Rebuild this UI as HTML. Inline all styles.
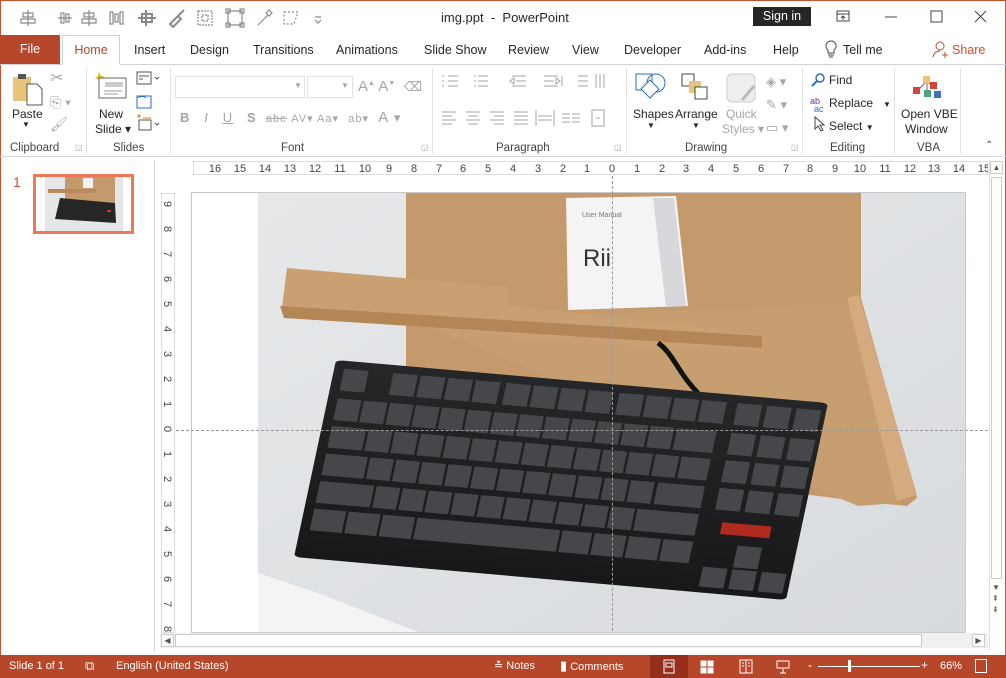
<!DOCTYPE html>
<html><head><meta charset="utf-8"><style>
*{box-sizing:border-box;margin:0;padding:0}
body{width:1006px;height:678px;position:relative;overflow:hidden;background:#fff;font-family:"Liberation Sans",sans-serif;font-size:12px;color:#262626}
.a{position:absolute}
.t{position:absolute;white-space:nowrap}
.g{color:#a6a6a6}
.lbl{position:absolute;top:142px;font-size:11.5px;color:#444}
.sep{position:absolute;top:68px;width:1px;height:86px;background:#e1e1e1}
.tab{position:absolute;top:43px;font-size:12.5px;color:#262626}
</style></head><body>
<div class="a" style="left:0;top:0;width:1006px;height:678px;border:1px solid #c9502f;border-bottom:none"></div>
<svg class="a" style="left:18px;top:8px" width="310" height="20" fill="none" stroke="#8a8a8a" stroke-width="1.2">
<path d="M10 2v16M5 5h10v4H5zM3 11h14v4H3z"/>
<path d="M40 10h14M43 5h3v10h-3zM48 6h3v8h-3z"/>
<path d="M71 2v16M66 5h10v4H66zM64 11h14v4H64z"/>
<path d="M92 4h3v12h-3zM97 6h3v8h-3zM102 4h3v12h-3z"/>
<path d="M124 6h10v8h-10zM128 2v16M120 10h18" stroke-width="2"/>
<path d="M152 16l8-8 3 3-8 8zM160 8l6-6" stroke-width="2"/>
<path d="M180 3h14v14h-14zM184 7h6v6h-6z" stroke-dasharray="2 1"/>
<path d="M210 3h14v14h-14zM208 1h4v4h-4zM222 1h4v4h-4zM208 15h4v4h-4zM222 15h4v4h-4z"/>
<path d="M240 17l10-10M248 5l3-3 3 3-3 3z"/>
<path d="M266 4h14l-4 12h-10z" stroke-dasharray="2 2"/>
<path d="M297 12l3 3 3-3M297 9h6" />
</svg>
<div class="t" style="left:441px;top:10px;font-size:13px">img.ppt &nbsp;-&nbsp; PowerPoint</div>
<div class="a" style="left:753px;top:7px;width:58px;height:19px;background:#262626;color:#fff;font-size:12.5px;text-align:center;line-height:19px">Sign in</div>
<svg class="a" style="left:830px;top:6px" width="160" height="22" fill="none" stroke="#444" stroke-width="1">
<path d="M7 5h12v10H7zM7 8h12M13 14v-4M11 12l2-2 2 2"/>
<path d="M55 11h12"/>
<path d="M101 5h11v11h-11z"/>
<path d="M145 5l11 11M156 5l-11 11"/>
</svg>
<div class="a" style="left:0;top:35px;width:60px;height:29px;background:#b7472a;color:#fff;font-size:12.5px;text-align:center;line-height:29px">File</div>
<div class="a" style="left:62px;top:35px;width:58px;height:30px;border:1px solid #d2d2d2;border-bottom:none;background:#fff;color:#b7472a;font-size:12.5px;text-align:center;line-height:28px">Home</div>
<div class="a" style="left:0;top:64px;width:1006px;height:1px;background:#d2d2d2"></div>
<div class="a" style="left:62px;top:64px;width:58px;height:1px;background:#fff"></div>
<div class="tab" style="left:134px">Insert</div>
<div class="tab" style="left:190px">Design</div>
<div class="tab" style="left:253px">Transitions</div>
<div class="tab" style="left:336px">Animations</div>
<div class="tab" style="left:424px">Slide Show</div>
<div class="tab" style="left:508px">Review</div>
<div class="tab" style="left:572px">View</div>
<div class="tab" style="left:624px">Developer</div>
<div class="tab" style="left:704px">Add-ins</div>
<div class="tab" style="left:773px">Help</div>
<svg class="a" style="left:824px;top:40px" width="14" height="20" fill="none" stroke="#444"><path d="M7 1a5 5 0 0 0-3 9v3h6v-3a5 5 0 0 0-3-9zM4 15h6M5 17h4"/></svg>
<div class="tab" style="left:843px">Tell me</div>
<svg class="a" style="left:932px;top:41px" width="18" height="18" fill="none" stroke="#c9502f"><circle cx="8" cy="5" r="4"/><path d="M1 16c1-5 4-6 7-6M13 11v6M10 14h6"/></svg>
<div class="tab" style="left:952px;color:#c9502f">Share</div>
<div class="a" style="left:0;top:156px;width:1006px;height:1px;background:#d8d8d8"></div>
<svg class="a" style="left:10px;top:72px" width="34" height="34"><rect x="3" y="5" width="18" height="24" fill="#e8c37a"/><rect x="8" y="2" width="8" height="5" fill="#555"/><path d="M17 12h10l5 5v16H17z" fill="#fff" stroke="#555"/></svg>
<div class="t" style="left:12px;top:107px">Paste</div>
<div class="t" style="left:22px;top:120px;font-size:8px">▼</div>
<div class="t g" style="left:50px;top:68px;font-size:16px">✂</div>
<div class="t g" style="left:50px;top:94px;font-size:14px">⎘ ▾</div>
<div class="t g" style="left:50px;top:116px;font-size:14px">🖌</div>
<div class="lbl" style="left:10px">Clipboard</div><div class="t g" style="left:75px;top:143px;font-size:8px">◲</div>
<div class="sep" style="left:86px"></div>
<svg class="a" style="left:95px;top:70px" width="34" height="30"><path d="M4 2l2 4 4 1-4 2-1 4-2-4-3-1 3-2z" fill="#f0b400"/><rect x="4" y="8" width="27" height="20" fill="#fff" stroke="#666"/><rect x="10" y="12" width="18" height="5" fill="#ccc"/><path d="M9 21h18M9 24h14" stroke="#999"/></svg>
<div class="t" style="left:99px;top:107px">New</div>
<div class="t" style="left:95px;top:122px">Slide ▾</div>
<svg class="a" style="left:136px;top:70px" width="30" height="64" fill="none" stroke="#555"><rect x="1" y="2" width="14" height="12"/><path d="M3 6h10M3 9h4M19 7l2 2 2-2"/><rect x="1" y="26" width="14" height="12" stroke="#2a6ebb"/><path d="M2 28a5 4 0 0 1 8 0" stroke="#2a6ebb"/><rect x="3" y="50" width="12" height="10" stroke="#555"/><path d="M1 46h4M3 44v4M7 48h8" stroke="#d87a1c"/><path d="M19 53l2 2 2-2"/></svg>
<div class="lbl" style="left:113px">Slides</div>
<div class="sep" style="left:170px"></div>
<div class="a" style="left:175px;top:76px;width:130px;height:22px;border:1px solid #e1e1e1"></div>
<div class="t g" style="left:294px;top:81px;font-size:8px">▼</div>
<div class="a" style="left:307px;top:76px;width:46px;height:22px;border:1px solid #e1e1e1"></div>
<div class="t g" style="left:341px;top:81px;font-size:8px">▼</div>
<div class="t g" style="left:358px;top:78px;font-size:15px">A<sup style="font-size:7px">▲</sup> A<sup style="font-size:7px">▼</sup> &nbsp;<span style="font-size:13px">⌫</span></div>
<div class="t g" style="left:180px;top:109px;font-size:13px;letter-spacing:1px"><b>B</b> &nbsp; <i>I</i> &nbsp; <u>U</u> &nbsp; <b>S</b> &nbsp;<s style="font-size:11px">abc</s> <span style="font-size:11px">AV▾ Aa▾</span> &nbsp;<span style="font-size:11px">ab▾</span> &nbsp;<span style="font-size:15px">A</span> ▾</div>
<div class="lbl" style="left:281px">Font</div><div class="t g" style="left:421px;top:143px;font-size:8px">◲</div>
<div class="sep" style="left:432px"></div>
<svg class="a" style="left:438px;top:72px" width="180" height="66" fill="none" stroke="#a6a6a6"><path d="M4 4h2M10 4h10M4 9h2M10 9h10M4 14h2M10 14h10M36 4h2M40 4h10M36 9h2M40 9h10M36 14h2M40 14h10M74 4h14M78 9h10M74 14h14M72 9l4-3v6zM106 4h14M106 9h10M106 14h14M122 9l-4-3v6zM124 4v10M140 4h10M140 9h10M140 14h10M158 2v14M162 2v14M166 2v14"/><path d="M4 40h14M4 44h10M4 48h14M4 52h10M28 40h14M30 44h10M28 48h14M30 52h10M52 40h14M56 44h10M52 48h14M56 52h10M76 40h14M76 44h14M76 48h14M76 52h14M98 38v16M116 38v16M100 44h14M100 48h14M124 42h8M124 46h8M124 50h8M134 42h8M134 46h8M134 50h8M154 38h12v16h-12zM158 46h4"/></svg>
<div class="lbl" style="left:496px">Paragraph</div><div class="t g" style="left:614px;top:143px;font-size:8px">◲</div>
<div class="sep" style="left:626px"></div>
<svg class="a" style="left:634px;top:72px" width="135" height="32"><rect x="2" y="2" width="16" height="16" fill="none" stroke="#2a6ebb"/><circle cx="22" cy="11" r="9" fill="none" stroke="#2a6ebb"/><path d="M16 8l9 9-9 9-9-9z" fill="#fff" stroke="#2a6ebb"/><rect x="48" y="2" width="12" height="12" fill="#fff" stroke="#444"/><rect x="55" y="9" width="12" height="12" fill="#e8c37a"/><rect x="61" y="15" width="12" height="12" fill="#fff" stroke="#444"/><rect x="93" y="2" width="28" height="28" rx="5" fill="#eee" stroke="#ccc"/><path d="M108 28l12-14" stroke="#bbb" stroke-width="3"/></svg>
<div class="t" style="left:633px;top:107px">Shapes</div><div class="t" style="left:647px;top:121px;font-size:8px">▼</div>
<div class="t" style="left:675px;top:107px">Arrange</div><div class="t" style="left:692px;top:121px;font-size:8px">▼</div>
<div class="t g" style="left:726px;top:107px">Quick</div>
<div class="t g" style="left:722px;top:122px">Styles ▾</div>
<div class="t g" style="left:766px;top:70px;font-size:13px;line-height:23px">◈ ▾<br>✎ ▾<br>▭ ▾</div>
<div class="lbl" style="left:685px">Drawing</div><div class="t g" style="left:791px;top:143px;font-size:8px">◲</div>
<div class="sep" style="left:802px"></div>
<svg class="a" style="left:810px;top:72px" width="18" height="64" fill="none"><circle cx="10" cy="6" r="4" stroke="#2a6ebb" stroke-width="1.5"/><path d="M7 9l-5 5" stroke="#2a6ebb" stroke-width="2"/><text x="0" y="32" font-size="9" fill="#7030a0" font-family="Liberation Sans">ab</text><text x="4" y="40" font-size="9" fill="#2a6ebb" font-family="Liberation Sans">ac</text><path d="M5 45v12l3-3 3 5 2-1-3-5h4z" stroke="#444"/></svg>
<div class="t" style="left:829px;top:73px">Find</div>
<div class="t" style="left:829px;top:96px">Replace &nbsp;&nbsp;<span style="font-size:8px">▼</span></div>
<div class="t" style="left:829px;top:119px">Select <span style="font-size:8px">▼</span></div>
<div class="lbl" style="left:830px">Editing</div>
<div class="sep" style="left:894px"></div>
<svg class="a" style="left:910px;top:72px" width="34" height="30"><path d="M9 17l8-8 8 8M17 9v12" stroke="#666" fill="none"/><rect x="13" y="4" width="7" height="7" fill="#e8c37a"/><rect x="20" y="10" width="7" height="7" fill="#d0443a"/><rect x="3" y="15" width="7" height="7" fill="#d0443a"/><rect x="14" y="18" width="7" height="7" fill="#4aa37a"/><rect x="24" y="19" width="7" height="7" fill="#3b73c0"/></svg>
<div class="t" style="left:901px;top:107px">Open VBE</div>
<div class="t" style="left:905px;top:122px">Window</div>
<div class="lbl" style="left:917px">VBA</div>
<div class="sep" style="left:960px"></div>
<div class="t" style="left:985px;top:140px;font-size:10px;color:#444">⌃</div>
<div class="a" style="left:154px;top:160px;width:1px;height:492px;background:#d4d4d4"></div>
<div class="t" style="left:13px;top:174px;font-size:14px;color:#c9502f">1</div>
<div class="a" style="left:33px;top:174px;width:101px;height:60px;border:3px solid #ee7755;background:#fff"></div>
<svg class="a" style="left:45px;top:177px" width="78" height="54"><rect width="78" height="54" fill="#e4e6e8"/><path d="M20 0h50v30H20z" fill="#c49a6c"/><path d="M3 12h48v4H3z" fill="#b8895a"/><rect x="38" y="1" width="10" height="10" fill="#f2f2f2"/><path d="M15 21l55 5 1 20-61-4z" fill="#262627"/><rect x="62" y="33" width="4" height="2" fill="#c33"/></svg>
<div class="a" style="left:193px;top:161px;width:795px;height:14px;border:1px solid #ddd;background:#fff"></div>
<svg class="a" style="left:193px;top:161px" width="795" height="14" font-family="Liberation Sans" font-size="11" fill="#444">
<g text-anchor="middle">
<text x="22" y="11">16</text><text x="47" y="11">15</text><text x="72" y="11">14</text><text x="97" y="11">13</text><text x="122" y="11">12</text><text x="147" y="11">11</text><text x="172" y="11">10</text><text x="196" y="11">9</text><text x="221" y="11">8</text><text x="246" y="11">7</text><text x="270" y="11">6</text><text x="295" y="11">5</text><text x="320" y="11">4</text><text x="345" y="11">3</text><text x="370" y="11">2</text><text x="394" y="11">1</text><text x="419" y="11">0</text><text x="444" y="11">1</text><text x="469" y="11">2</text><text x="493" y="11">3</text><text x="518" y="11">4</text><text x="543" y="11">5</text><text x="568" y="11">6</text><text x="593" y="11">7</text><text x="617" y="11">8</text><text x="642" y="11">9</text><text x="667" y="11">10</text><text x="692" y="11">11</text><text x="717" y="11">12</text><text x="741" y="11">13</text><text x="766" y="11">14</text><text x="791" y="11">15</text></g>
</svg>
<div class="a" style="left:161px;top:193px;width:14px;height:440px;border:1px solid #ddd;background:#fff"></div>
<svg class="a" style="left:161px;top:193px" width="14" height="440" font-family="Liberation Sans" font-size="11" fill="#444">
<g transform="rotate(90)">
<text x="8" y="-3">9</text><text x="33" y="-3">8</text><text x="58" y="-3">7</text><text x="83" y="-3">6</text><text x="108" y="-3">5</text><text x="133" y="-3">4</text><text x="158" y="-3">3</text><text x="183" y="-3">2</text><text x="208" y="-3">1</text><text x="233" y="-3">0</text><text x="258" y="-3">1</text><text x="283" y="-3">2</text><text x="308" y="-3">3</text><text x="333" y="-3">4</text><text x="358" y="-3">5</text><text x="383" y="-3">6</text><text x="408" y="-3">7</text><text x="433" y="-3">8</text></g>
</svg>
<div class="a" style="left:191px;top:192px;width:775px;height:441px;border:1px solid #c8c8c8;background:#fff"></div>
<svg class="a" style="left:258px;top:193px" width="707" height="439">
<defs><linearGradient id="bg" x1="0" y1="0" x2="1" y2="1"><stop offset="0" stop-color="#e6e8ea"/><stop offset="1" stop-color="#d8dbde"/></linearGradient>
<linearGradient id="kb" x1="0" y1="0" x2="0" y2="1"><stop offset="0" stop-color="#252628"/><stop offset="1" stop-color="#18181a"/></linearGradient></defs>
<rect width="707" height="439" fill="url(#bg)"/>
<path d="M0 380l60 20 100 39H0z" fill="#f4f4f4"/>
<path d="M148 0h455v105l56 200-10 8-50-5L148 250z" fill="#c49a6c"/>
<path d="M160 130l430 -20 50 200-40 3z" fill="#c79e70"/>
<path d="M589 105l12-3 58 200-20 6z" fill="#d3ab7e"/>
<path d="M29 75l221 19 0 18 255 30 0 16-223-10-258-34z" fill="#caa072"/>
<path d="M22 113l482 30 0 12-478-30z" fill="#b48656"/>
<path d="M308 5l110-2 12 110-120 4z" fill="#f4f4f5"/>
<path d="M395 5h21l12 108-20 1z" fill="#d8d8dc"/>
<text x="324" y="24" font-size="7" fill="#777" font-family="Liberation Sans">User Manual</text>
<text x="325" y="73" font-size="24" fill="#333" font-family="Liberation Sans">Rii</text>
<path d="M400 150c15 10 20 30 40 50" stroke="#111" stroke-width="5" fill="none"/>
<g transform="matrix(4.92,0.43,-0.42,1.97,78,167)">
<rect x="0" y="0" width="100" height="100" rx="1.5" fill="url(#kb)"/>
<g fill="#46474a">
<rect x="2" y="4" width="5" height="11" rx=".5"/><rect x="12" y="4" width="5" height="11"/><rect x="17.6" y="4" width="5" height="11"/><rect x="23.2" y="4" width="5" height="11"/><rect x="28.8" y="4" width="5" height="11"/><rect x="35" y="4" width="5" height="11"/><rect x="40.6" y="4" width="5" height="11"/><rect x="46.2" y="4" width="5" height="11"/><rect x="51.8" y="4" width="5" height="11"/><rect x="58" y="4" width="5" height="11"/><rect x="63.6" y="4" width="5" height="11"/><rect x="69.2" y="4" width="5" height="11"/><rect x="74.8" y="4" width="5" height="11"/><rect x="82" y="4" width="5" height="11"/><rect x="88" y="4" width="5" height="11"/><rect x="94" y="4" width="5" height="11"/>
<rect x="2" y="19" width="4.8" height="11"/><rect x="7.3" y="19" width="4.8" height="11"/><rect x="12.6" y="19" width="4.8" height="11"/><rect x="17.9" y="19" width="4.8" height="11"/><rect x="23.2" y="19" width="4.8" height="11"/><rect x="28.5" y="19" width="4.8" height="11"/><rect x="33.8" y="19" width="4.8" height="11"/><rect x="39.1" y="19" width="4.8" height="11"/><rect x="44.4" y="19" width="4.8" height="11"/><rect x="49.7" y="19" width="4.8" height="11"/><rect x="55" y="19" width="4.8" height="11"/><rect x="60.3" y="19" width="4.8" height="11"/><rect x="65.6" y="19" width="4.8" height="11"/><rect x="71" y="19" width="8" height="11"/><rect x="82" y="19" width="5" height="11"/><rect x="88" y="19" width="5" height="11"/><rect x="94" y="19" width="5" height="11"/>
<rect x="2" y="33" width="7" height="11"/><rect x="9.5" y="33" width="4.8" height="11"/><rect x="14.8" y="33" width="4.8" height="11"/><rect x="20.1" y="33" width="4.8" height="11"/><rect x="25.4" y="33" width="4.8" height="11"/><rect x="30.7" y="33" width="4.8" height="11"/><rect x="36" y="33" width="4.8" height="11"/><rect x="41.3" y="33" width="4.8" height="11"/><rect x="46.6" y="33" width="4.8" height="11"/><rect x="51.9" y="33" width="4.8" height="11"/><rect x="57.2" y="33" width="4.8" height="11"/><rect x="62.5" y="33" width="4.8" height="11"/><rect x="67.8" y="33" width="4.8" height="11"/><rect x="73.1" y="33" width="5.9" height="11"/><rect x="82" y="33" width="5" height="11"/><rect x="88" y="33" width="5" height="11"/><rect x="94" y="33" width="5" height="11"/>
<rect x="2" y="47" width="8.5" height="11"/><rect x="11" y="47" width="4.8" height="11"/><rect x="16.3" y="47" width="4.8" height="11"/><rect x="21.6" y="47" width="4.8" height="11"/><rect x="26.9" y="47" width="4.8" height="11"/><rect x="32.2" y="47" width="4.8" height="11"/><rect x="37.5" y="47" width="4.8" height="11"/><rect x="42.8" y="47" width="4.8" height="11"/><rect x="48.1" y="47" width="4.8" height="11"/><rect x="53.4" y="47" width="4.8" height="11"/><rect x="58.7" y="47" width="4.8" height="11"/><rect x="64" y="47" width="4.8" height="11"/><rect x="69.5" y="47" width="9.5" height="11"/><rect x="82" y="47" width="5" height="11"/><rect x="88" y="47" width="5" height="11"/><rect x="94" y="47" width="5" height="11"/>
<rect x="2" y="61" width="11" height="11"/><rect x="13.5" y="61" width="4.8" height="11"/><rect x="18.8" y="61" width="4.8" height="11"/><rect x="24.1" y="61" width="4.8" height="11"/><rect x="29.4" y="61" width="4.8" height="11"/><rect x="34.7" y="61" width="4.8" height="11"/><rect x="40" y="61" width="4.8" height="11"/><rect x="45.3" y="61" width="4.8" height="11"/><rect x="50.6" y="61" width="4.8" height="11"/><rect x="55.9" y="61" width="4.8" height="11"/><rect x="61.2" y="61" width="4.8" height="11"/><rect x="66.5" y="61" width="12.5" height="11"/><rect x="88" y="75" width="5" height="11"/>
<rect x="2" y="75" width="6.5" height="11"/><rect x="9" y="75" width="6.5" height="11"/><rect x="16" y="75" width="6.5" height="11"/><rect x="23" y="75" width="29" height="11"/><rect x="52.5" y="75" width="6" height="11"/><rect x="59" y="75" width="6.5" height="11"/><rect x="66" y="75" width="6.5" height="11"/><rect x="73" y="75" width="6" height="11"/><rect x="82" y="87" width="5" height="10"/><rect x="88" y="87" width="5" height="10"/><rect x="94" y="87" width="5" height="10"/>
</g>
<rect x="84" y="64" width="10" height="6" fill="#b12a1f"/>
</g>
</svg>
<div class="a" style="left:612px;top:176px;width:0;height:455px;border-left:1px dashed #999"></div>
<div class="a" style="left:176px;top:430px;width:812px;height:0;border-top:1px dashed #999"></div>
<div class="a" style="left:989px;top:160px;width:15px;height:490px;background:#fff;border-left:1px solid #ddd"></div>
<div class="a" style="left:990px;top:161px;width:13px;height:13px;border:1px solid #ccc;font-size:8px;text-align:center;line-height:11px;color:#555">▲</div>
<div class="a" style="left:991px;top:177px;width:11px;height:402px;border:1px solid #ccc"></div>
<div class="t" style="left:992px;top:582px;font-size:8px;color:#555;line-height:11px">▼<br>⇞<br>⇟</div>
<div class="a" style="left:160px;top:633px;width:828px;height:15px;background:#f0f0f0"></div>
<div class="a" style="left:161px;top:634px;width:13px;height:13px;border:1px solid #ccc;background:#fff;font-size:8px;line-height:11px;text-align:center;color:#555">◀</div>
<div class="a" style="left:175px;top:634px;width:747px;height:13px;border:1px solid #ccc;background:#fff"></div>
<div class="a" style="left:972px;top:634px;width:13px;height:13px;border:1px solid #ccc;background:#fff;font-size:8px;line-height:11px;text-align:center;color:#555">▶</div>
<div class="a" style="left:0;top:655px;width:1006px;height:23px;background:#b7472a;color:#fff;font-size:11px"></div>
<div class="t" style="left:9px;top:660px;color:#fff;font-size:11px">Slide 1 of 1</div>
<div class="t" style="left:85px;top:658px;color:#fff;font-size:13px">⧉</div>
<div class="t" style="left:116px;top:660px;color:#fff;font-size:11px">English (United States)</div>
<div class="t" style="left:494px;top:659px;color:#fff;font-size:11px">≛ Notes</div>
<div class="t" style="left:560px;top:658px;color:#fff;font-size:11px"><span style="font-size:13px">▮</span> Comments</div>
<div class="a" style="left:650px;top:655px;width:38px;height:23px;background:#952f1c"></div>
<svg class="a" style="left:650px;top:655px" width="160" height="23" fill="none" stroke="#fff"><path d="M14 5h10v13H14zM16 8h6v4h-6z"/><path d="M51 6h5v5h-5zM58 6h5v5h-5zM51 13h5v5h-5zM58 13h5v5h-5z" fill="#fff"/><path d="M90 5h12v13H90zM96 5v13M92 8h2M92 11h2M98 8h2M98 11h2"/><path d="M127 6h12v7h-12zM133 13v5M130 18h6"/></svg>
<div class="t" style="left:808px;top:658px;color:#fff;font-size:12px">-</div>
<div class="a" style="left:818px;top:666px;width:102px;height:1px;background:#fff"></div>
<div class="a" style="left:848px;top:660px;width:3px;height:12px;background:#fff"></div>
<div class="t" style="left:921px;top:658px;color:#fff;font-size:12px">+</div>
<div class="t" style="left:940px;top:660px;color:#fff;font-size:11px">66%</div>
<div class="a" style="left:975px;top:659px;width:12px;height:14px;border:1px solid #fff"></div>
</body></html>
